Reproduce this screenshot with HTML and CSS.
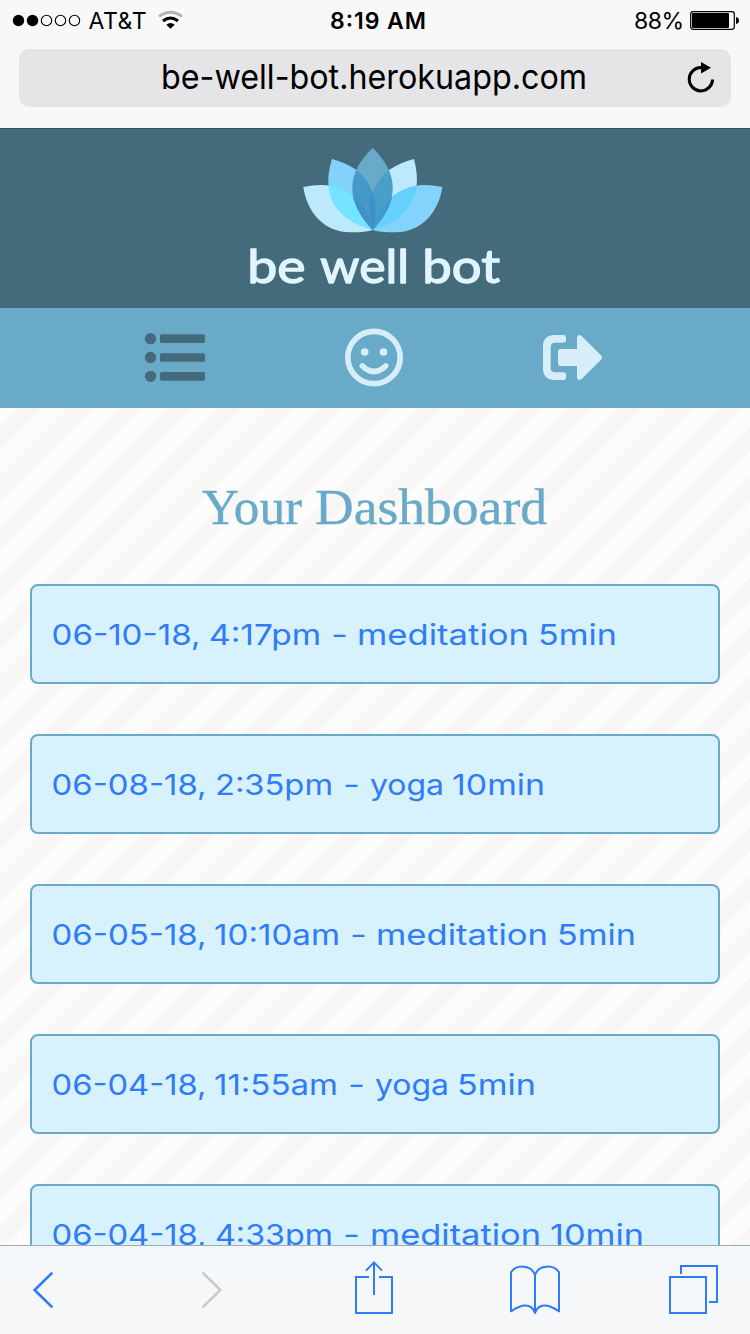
FILE: index.html
```html
<!DOCTYPE html>
<html lang="en">
<head>
<meta charset="utf-8">
<title>be well bot</title>
<link rel="stylesheet" href="styles.css">
</head>
<body>
<div class="screen">
  <div class="browser-bar">
    <div class="status">
      <svg class="status-left" width="200" height="40" viewBox="0 0 200 40">
        <circle cx="18.5" cy="20.5" r="5.7"/><circle cx="32.5" cy="20.5" r="5.7"/>
        <g class="dot-empty"><circle cx="46.5" cy="20.5" r="5.2"/><circle cx="60.5" cy="20.5" r="5.2"/><circle cx="74.5" cy="20.5" r="5.2"/></g>
        <text class="status-text" x="88.500" y="29" textLength="58">AT&amp;T</text>
        <path class="wifi-weak" d="M159 16.500Q170.500 8 182 16.500"/>
        <path class="wifi-on" d="M163 21Q170.500 15 178 21"/>
        <path d="M166.300 24.700Q170.500 21.200 174.700 24.700L170.500 28.800Z"/>
      </svg>
      <svg class="status-time" width="110" height="40" viewBox="320 0 110 40"><text class="status-text bold" x="330" y="29" textLength="96">8:19 AM</text></svg>
      <svg class="status-right" width="130" height="40" viewBox="620 0 130 40">
        <text class="status-text" x="634" y="29" textLength="50">88%</text>
        <rect class="battery" x="690.700" y="11.700" width="43.600" height="17.600" rx="2.500"/>
        <rect x="692" y="13" width="37" height="15" rx="1"/>
        <path d="M736 17Q739 17.500 739 20.500T736 24Z"/>
      </svg>
    </div>
    <div class="address">
      <svg width="712" height="58" viewBox="19 49 712 58">
        <text class="url" x="161" y="89" textLength="426" lengthAdjust="spacingAndGlyphs">be-well-bot.herokuapp.com</text>
        <path class="reload" d="M701.500 67.500A11.700 11.700 0 1 0 712.600 79.500"/>
        <path d="M701 62L711 67.800L701 73.500Z"/>
      </svg>
    </div>
  </div>

  <header class="brand">
    <svg width="270" height="165" viewBox="0 0 810 495">
      <defs>
        <path id="lo" d="M190 156Q235 146 272 152C335 165 382 213 398 285Q372 293 330 292C245 290 200 225 190 156Z"/>
        <path id="ro" d="M607 156Q563 146 526 152C462 165 415 213 398 285Q425 293 467 292C552 290 597 225 607 156Z"/>
        <path id="lm" d="M276 72Q315 82 350 105C398 145 420 205 398 285C310 260 236 200 276 72Z"/>
        <path id="rm" d="M522 72Q481 82 447 105C398 145 376 205 398 285C486 260 556 200 522 72Z"/>
        <path id="mid" d="M398 38C360 75 337 115 337 160C337 210 370 255 398 285C430 250 458 210 458 160C458 115 435 75 398 38Z"/>
        <clipPath id="c-lm"><use href="#lm"/></clipPath>
        <clipPath id="c-rm"><use href="#rm"/></clipPath>
        <clipPath id="c-mid"><use href="#mid"/></clipPath>
      </defs>
      <use href="#rm" fill="#bce9fd"/>
      <use href="#ro" fill="#83d3fc"/>
      <g clip-path="url(#c-rm)"><use href="#ro" fill="#65d0fc"/></g>
      <use href="#lo" fill="#bde9fd"/>
      <use href="#lm" fill="#83d2fc"/>
      <g clip-path="url(#c-lm)"><use href="#lo" fill="#75e4fe"/></g>
      <use href="#mid" fill="#69aac9"/>
      <g clip-path="url(#c-mid)">
        <use href="#rm" fill="#48a0c9"/>
        <use href="#ro" fill="#4199ce"/>
        <use href="#lm" fill="#4499c9"/>
        <g clip-path="url(#c-lm)"><use href="#rm" fill="#3f8fc8"/><use href="#lo" fill="#4191c8"/></g>
      </g>
      <g class="logo-text">
        <text x="22" y="443" textLength="175" lengthAdjust="spacingAndGlyphs">be</text>
        <text x="241" y="443" textLength="266" lengthAdjust="spacingAndGlyphs">well</text>
        <text x="547" y="443" textLength="233" lengthAdjust="spacingAndGlyphs">bot</text>
      </g>
    </svg>
  </header>

  <nav class="nav">
    <a class="nav-item active">
      <svg width="66" height="60" viewBox="36 54 198 180">
        <circle cx="61.500" cy="86" r="17"/><circle cx="61.500" cy="142.500" r="17"/><circle cx="61.500" cy="199" r="17"/>
        <rect x="90" y="73" width="135" height="26" rx="5"/><rect x="90" y="129.500" width="135" height="26" rx="5"/><rect x="90" y="186" width="135" height="26" rx="5"/>
      </svg>
    </a>
    <a class="nav-item">
      <svg width="66" height="60" viewBox="636 54 198 180">
        <circle class="ring" cx="732" cy="142.500" r="78.500"/>
        <circle cx="704" cy="126" r="11.500"/><circle cx="760.500" cy="126" r="11.500"/>
        <path class="smile" d="M697 168Q732 201 767 168"/>
      </svg>
    </a>
    <a class="nav-item">
      <svg width="66" height="60" viewBox="66 54 198 180">
        <path d="M131 75Q138 75 138 82V91Q138 98 131 98H105Q92 98 92 111V174Q92 187 105 187H131Q138 187 138 193V203Q138 210 131 210H104Q69 210 69 175V110Q69 75 104 75Z"/>
        <path d="M114 125Q114 117 122 117H171V83Q172 71 184 77L243 136Q249 142.500 243 149L184 208Q173 214 171 203V168H122Q114 168 114 160Z"/>
      </svg>
    </a>
  </nav>

  <main class="dashboard">
    <h1 class="title"><svg width="350" height="80" viewBox="200 468 350 80"><text x="202" y="524" textLength="100" lengthAdjust="spacingAndGlyphs">Your</text><text x="315" y="524" textLength="232" lengthAdjust="spacingAndGlyphs">Dashboard</text></svg></h1>
    <ul class="entries">
      <li class="entry"><svg width="640" height="96" viewBox="32 0 640 96"><text x="51.500" y="59" textLength="149" lengthAdjust="spacingAndGlyphs">06-10-18,</text><text x="209" y="59" textLength="112" lengthAdjust="spacingAndGlyphs">4:17pm</text><text x="331" y="59" textLength="17" lengthAdjust="spacingAndGlyphs">-</text><text x="357" y="59" textLength="172" lengthAdjust="spacingAndGlyphs">meditation</text><text x="538" y="59" textLength="79" lengthAdjust="spacingAndGlyphs">5min</text></svg></li>
      <li class="entry"><svg width="640" height="96" viewBox="32 0 640 96"><text x="51.500" y="59" textLength="155" lengthAdjust="spacingAndGlyphs">06-08-18,</text><text x="215" y="59" textLength="118" lengthAdjust="spacingAndGlyphs">2:35pm</text><text x="343" y="59" textLength="17" lengthAdjust="spacingAndGlyphs">-</text><text x="370" y="59" textLength="74" lengthAdjust="spacingAndGlyphs">yoga</text><text x="452" y="59" textLength="93" lengthAdjust="spacingAndGlyphs">10min</text></svg></li>
      <li class="entry"><svg width="640" height="96" viewBox="32 0 640 96"><text x="51.500" y="59" textLength="155" lengthAdjust="spacingAndGlyphs">06-05-18,</text><text x="214" y="59" textLength="126" lengthAdjust="spacingAndGlyphs">10:10am</text><text x="350" y="59" textLength="17" lengthAdjust="spacingAndGlyphs">-</text><text x="376" y="59" textLength="172" lengthAdjust="spacingAndGlyphs">meditation</text><text x="557" y="59" textLength="79" lengthAdjust="spacingAndGlyphs">5min</text></svg></li>
      <li class="entry"><svg width="640" height="96" viewBox="32 0 640 96"><text x="51.500" y="59" textLength="155" lengthAdjust="spacingAndGlyphs">06-04-18,</text><text x="214" y="59" textLength="124" lengthAdjust="spacingAndGlyphs">11:55am</text><text x="348" y="59" textLength="17" lengthAdjust="spacingAndGlyphs">-</text><text x="375" y="59" textLength="74" lengthAdjust="spacingAndGlyphs">yoga</text><text x="457" y="59" textLength="79" lengthAdjust="spacingAndGlyphs">5min</text></svg></li>
      <li class="entry"><svg width="640" height="96" viewBox="32 0 640 96"><text x="51.500" y="59" textLength="155" lengthAdjust="spacingAndGlyphs">06-04-18,</text><text x="215" y="59" textLength="118" lengthAdjust="spacingAndGlyphs">4:33pm</text><text x="343" y="59" textLength="17" lengthAdjust="spacingAndGlyphs">-</text><text x="370" y="59" textLength="171" lengthAdjust="spacingAndGlyphs">meditation</text><text x="550" y="59" textLength="94" lengthAdjust="spacingAndGlyphs">10min</text></svg></li>
    </ul>
  </main>

  <footer class="toolbar">
    <svg class="thick" width="30" height="60" viewBox="84 270 90 180"><path d="M157 308L104 360L157 412"/></svg>
    <svg class="thick off" width="30" height="60" viewBox="591 270 90 180"><path d="M608 308L661 360L608 412"/></svg>
    <svg width="48" height="60" viewBox="30 90 144 180"><path d="M87 141H48V249H156V141H117M102 195V97M78 122L102 97L126 122"/></svg>
    <svg width="60" height="60" viewBox="495 90 180 180"><path stroke-linejoin="round" d="M585 249V135C574 103 529 103 513 127V244C545 222 574 218 585 249C596 218 625 222 657 244V127C641 103 596 103 585 135"/></svg>
    <svg width="60" height="60" viewBox="972 90 180 180"><path d="M990 141H1098V249H990ZM1023 132V108H1131V216H1107"/></svg>
  </footer>
</div>
</body>
</html>
```
FILE: styles.css
```css
* { box-sizing: border-box; }
body { margin: 0; }
svg { display: block; flex: none; }

.screen {
  display: flex;
  flex-direction: column;
  width: 750px;
  height: 1334px;
  overflow: hidden;
  font-family: Inter, "Liberation Sans", sans-serif;
}

.browser-bar { flex: none; height: 128px; background: #f8f8f8; }
.status { display: flex; height: 49px; }
.status-time { margin-left: 120px; }
.status-right { margin-left: 190px; }
.status-text { font-size: 23px; }
.bold { font-weight: 600; }
.dot-empty { fill: none; stroke: #000; stroke-width: 1.1; }
.wifi-weak { fill: none; stroke: #b2b2b2; stroke-width: 2.7; }
.wifi-on { fill: none; stroke: #000; stroke-width: 3; }
.battery { fill: none; stroke: #000; stroke-width: 1.2; }
.address { width: 712px; height: 58px; margin: 0 auto; border-radius: 10px; background: #e5e5e7; }
.url { font-size: 34px; }
.reload { fill: none; stroke: #000; stroke-width: 3; }

.brand {
  display: flex;
  flex: none;
  justify-content: center;
  height: 180px;
  padding-top: 6px;
  border-top: 1px solid #34515f;
  background: #446b7c;
}
.logo-text {
  font: 400 142px Lato, sans-serif;
  fill: #e0f5fe;
  stroke: #e0f5fe;
  stroke-width: 4;
  stroke-linejoin: round;
}

.nav { display: flex; flex: none; height: 100px; padding: 0 75px; background: #69aac9; }
.nav-item { display: flex; flex: 1; align-items: center; justify-content: center; fill: #d7eef9; }
.active { fill: #446b7c; }
.ring { fill: none; stroke: #d7eef9; stroke-width: 17; }
.smile { fill: none; stroke: #d7eef9; stroke-width: 17; stroke-linecap: round; }

.dashboard {
  flex: 1;
  min-height: 0;
  padding: 60px 30px 0;
  overflow: hidden;
  background: linear-gradient(135deg, #fcfcfc 25%, #f8f7f5 25%, #f8f7f5 50%, #fcfcfc 50%, #fcfcfc 75%, #f8f7f5 75%) 0 -6.5px / 50px 50px;
}
.title { display: flex; justify-content: center; height: 116px; margin: 0; }
.title text { font: 400 51px "Liberation Serif", serif; fill: #69aac9; stroke: #69aac9; stroke-width: 0.4; }
.entries { display: flex; flex-direction: column; gap: 50px; margin: 0; padding: 0; list-style: none; }
.entry { flex: none; height: 100px; border: 2px solid #69aac9; border-radius: 8px; background: #d7f1fd; }
.entry text { font-size: 29px; fill: #2f7cf6; }

.toolbar {
  display: grid;
  grid-template-columns: 169px 153px 155px 159px 1fr;
  flex: none;
  height: 89px;
  padding: 14px 0 0 28px;
  border-top: 1px solid #a6abad;
  background: linear-gradient(#f2f7f9, #f5f7f9 30%, #f6f7f9);
  fill: none;
  stroke: #2f7cf6;
  stroke-width: 6;
}
.thick { stroke-width: 8; }
.off { stroke: #c9cacc; }
```
